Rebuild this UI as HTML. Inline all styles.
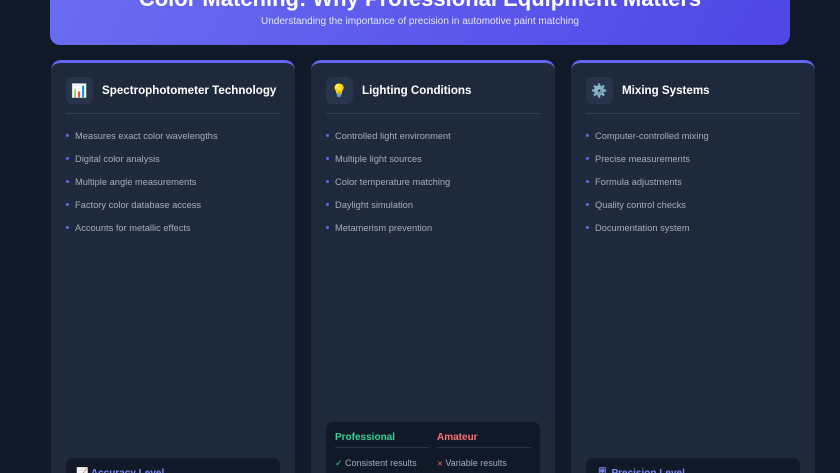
<!DOCTYPE html>
<html style="width:840px;height:473px;overflow:hidden"><head><meta charset="utf-8"><style>
*{margin:0;padding:0;box-sizing:border-box}
body{width:840px;height:473px;overflow:hidden;background:#111827;font-family:"Liberation Sans",sans-serif;position:relative}
.hdr{position:absolute;left:50px;top:-30px;width:740px;height:75px;border-radius:10px;background:linear-gradient(120deg,#6a6ef2,#4f46e5);color:#fff;text-align:center}
.hdr h1{position:absolute;top:16px;width:100%;font-size:22px;font-weight:bold}
.hdr p{position:absolute;top:46px;width:100%;font-size:10px;color:#e0e7ff}
.card{position:absolute;top:60px;width:244px;height:440px;background:#1e293b;border-radius:10px;border-top:3px solid #6366f1}
.ic{position:absolute;left:15px;top:14px;width:27px;height:27px;border-radius:6px;background:#273449;font-size:13px;text-align:center;line-height:27px}
.t{position:absolute;left:51px;top:21px;font-size:11.6px;font-weight:bold;color:#fff}
.dv{position:absolute;left:15px;right:15px;top:50px;height:1px;background:#334155}
ul{position:absolute;left:15px;top:68px;list-style:none}
li{font-size:9.3px;color:#a3adbd;height:23px;position:relative;padding-left:9px}
li:before{content:"";position:absolute;left:0;top:3px;width:3px;height:3px;border-radius:50%;background:#6366f1}
.bx{position:absolute;left:15px;right:15px;background:#111827;border-radius:7px}
.lv{position:absolute;left:10px;top:10px;font-size:10px;font-weight:bold;color:#818cf8}
</style></head><body>
<div class="hdr"><h1>Color Matching: Why Professional Equipment Matters</h1><p>Understanding the importance of precision in automotive paint matching</p></div>

<div class="card" style="left:51px"><div class="ic">📊</div><div class="t">Spectrophotometer Technology</div><div class="dv"></div>
<ul><li>Measures exact color wavelengths</li><li>Digital color analysis</li><li>Multiple angle measurements</li><li>Factory color database access</li><li>Accounts for metallic effects</li></ul>
<div class="bx" style="top:395px;height:60px"><div class="lv">📈 Accuracy Level</div></div></div>

<div class="card" style="left:311px"><div class="ic">💡</div><div class="t">Lighting Conditions</div><div class="dv"></div>
<ul><li>Controlled light environment</li><li>Multiple light sources</li><li>Color temperature matching</li><li>Daylight simulation</li><li>Metamerism prevention</li></ul>
<div class="bx" style="top:359px;height:80px">
<div style="position:absolute;left:9px;top:10px;font-size:10px;font-weight:bold;color:#34d399">Professional</div>
<div style="position:absolute;left:111px;top:10px;font-size:10px;font-weight:bold;color:#f87171">Amateur</div>
<div style="position:absolute;left:9px;top:25px;width:94px;height:1px;background:#263246"></div>
<div style="position:absolute;left:111px;top:25px;width:94px;height:1px;background:#263246"></div>
<div style="position:absolute;left:9px;top:36px;font-size:9px;color:#a3adbd"><span style="color:#34d399">✓</span> Consistent results</div>
<div style="position:absolute;left:111px;top:36px;font-size:9px;color:#a3adbd"><span style="color:#f87171;font-size:7px">✕</span> Variable results</div>
</div></div>

<div class="card" style="left:571px"><div class="ic">⚙️</div><div class="t">Mixing Systems</div><div class="dv"></div>
<ul><li>Computer-controlled mixing</li><li>Precise measurements</li><li>Formula adjustments</li><li>Quality control checks</li><li>Documentation system</li></ul>
<div class="bx" style="top:395px;height:60px"><div class="lv">🎚 Precision Level</div></div></div>
</body></html>
